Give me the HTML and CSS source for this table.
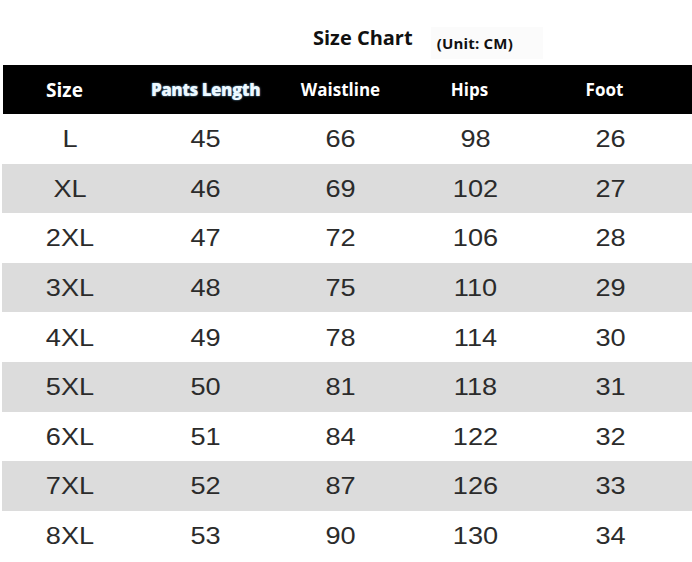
FILE: index.html
```html
<!DOCTYPE html>
<html>
<head>
<meta charset="utf-8">
<link rel="stylesheet" href="styles.css">
</head>
<body>
<div class="page">
  <div class="title-bar">
    <span class="title">Size Chart</span>
    <span class="unit">(Unit: CM)</span>
  </div>
  <div class="chart">
    <div class="row head">
      <div class="cell h-size">Size</div>
      <div class="cell h-len">Pants Length</div>
      <div class="cell">Waistline</div>
      <div class="cell h-hips">Hips</div>
      <div class="cell h-foot">Foot</div>
    </div>
    <div class="row"><div class="cell">L</div><div class="cell">45</div><div class="cell">66</div><div class="cell">98</div><div class="cell">26</div></div>
    <div class="row alt"><div class="cell">XL</div><div class="cell">46</div><div class="cell">69</div><div class="cell">102</div><div class="cell">27</div></div>
    <div class="row"><div class="cell">2XL</div><div class="cell">47</div><div class="cell">72</div><div class="cell">106</div><div class="cell">28</div></div>
    <div class="row alt"><div class="cell">3XL</div><div class="cell">48</div><div class="cell">75</div><div class="cell">110</div><div class="cell">29</div></div>
    <div class="row"><div class="cell">4XL</div><div class="cell">49</div><div class="cell">78</div><div class="cell">114</div><div class="cell">30</div></div>
    <div class="row alt"><div class="cell">5XL</div><div class="cell">50</div><div class="cell">81</div><div class="cell">118</div><div class="cell">31</div></div>
    <div class="row"><div class="cell">6XL</div><div class="cell">51</div><div class="cell">84</div><div class="cell">122</div><div class="cell">32</div></div>
    <div class="row alt"><div class="cell">7XL</div><div class="cell">52</div><div class="cell">87</div><div class="cell">126</div><div class="cell">33</div></div>
    <div class="row"><div class="cell">8XL</div><div class="cell">53</div><div class="cell">90</div><div class="cell">130</div><div class="cell">34</div></div>
  </div>
</div>
</body>
</html>
```
FILE: styles.css
```css
html, body {
  margin: 0;
  padding: 0;
  background: #ffffff;
}
.page {
  width: 692px;
  height: 562px;
  overflow: hidden;
}
.title-bar {
  height: 65px;
  display: flex;
  align-items: center;
  font-family: "Open Sans", sans-serif;
  font-weight: 700;
  color: #111;
}
.title {
  margin-left: 313px;
  font-size: 20px;
  margin-top: 10px;
}
.unit {
  margin-left: 18px;
  font-size: 15px;
  margin-top: 20px;
  padding: 6px 30px 6px 6px;
  background: #fbfbfb;
  letter-spacing: 0.2px;
}
.chart {
  display: flex;
  flex-direction: column;
}
.row {
  display: grid;
  grid-template-columns: 136px 135px 135px 135px 135px 1fr;
  height: 49.6px;
  align-items: center;
  margin-left: 2px;
  font-family: "Liberation Sans", Arial, sans-serif;
  font-size: 23px;
  color: #2b2b2b;
}
.row .cell {
  transform: scaleX(1.18);
  padding-top: 2px;
}
.row.alt {
  background: #dcdcdc;
}
.cell {
  text-align: center;
}
.row.head {
  margin-left: 3px;
  height: 49px;
  background: #000;
  color: #fff;
  font-family: "Open Sans", sans-serif;
  font-weight: 700;
  font-size: 17px;
  grid-template-columns: 135px 135px 135px 135px 135px 1fr;
}
.row.head .cell {
  transform: none;
  padding-top: 0;
}
.row.head .h-size {
  font-size: 19px;
  padding-right: 12px;
}
.h-hips, .h-foot {
  padding-right: 12px;
}
.h-len {
  color: #eef9ff;
  font-weight: 800;
  letter-spacing: -0.5px;
  text-shadow: 0 0 2px #7fb8e0;
}
```
